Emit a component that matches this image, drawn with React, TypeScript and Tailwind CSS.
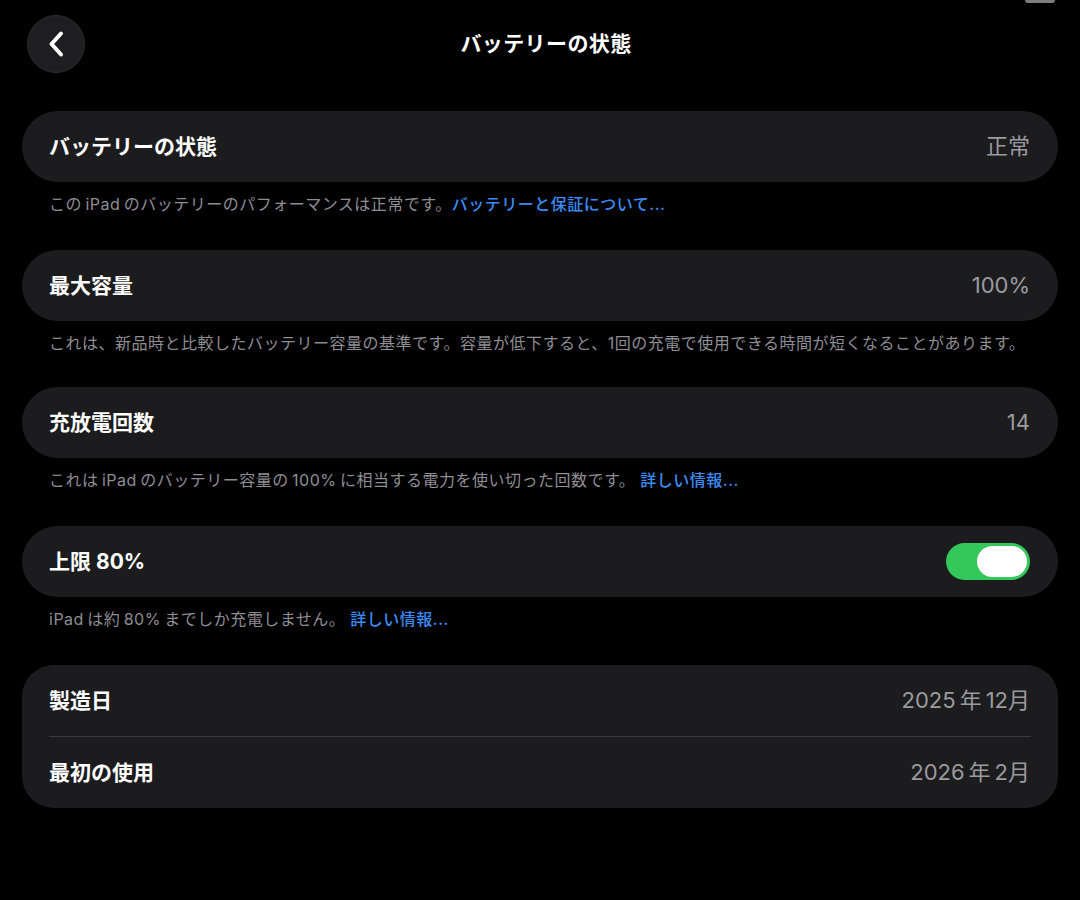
import React from "react";

const font = { fontFamily: '"Inter", "Noto Sans CJK JP", sans-serif' };

function Row({ label, value, children }: { label: string; value?: string; children?: React.ReactNode }) {
    return (
        <div className="flex items-center justify-between h-[71px] pl-[27px] pr-[28px]">
            <span className="text-[21px] font-bold text-white">{label}</span>
            {value && <span className="text-[22px] text-[#9a9aa0]">{value}</span>}
            {children}
        </div>
    );
}

function Note({ text, link, tight }: { text: string; link?: string; tight?: boolean }) {
    return (
        <p className={`pl-[27px] pt-[11px] ${tight ? "pb-[33px]" : "pb-[35px]"} text-[16px] tracking-[0.5px] leading-[22px] text-[#8e8e93]`}>
            {text}
            {link && <span className="text-[#3b8cf6] font-medium">{link}</span>}
        </p>
    );
}

export default function App() {
    return (
        <div className="relative min-h-[900px] bg-black px-[22px]" style={font}>
            {/* partial element at the top edge */}
            <div className="absolute top-0 right-[25px] w-[30px] h-[3px] rounded-b bg-[#7c7c7c]" />

            {/* Header */}
            <div className="relative flex items-center justify-center h-[88px] pl-[12px]">
                <button className="absolute left-[5px] top-[15px] w-[58px] h-[58px] rounded-full bg-[#1e1e20] border border-[#2c2c2e] flex items-center justify-center">
                    <svg width="18" height="28" viewBox="0 0 18 28" fill="none">
                        <path d="M14 3.5 L4.5 14 L14 24.5" stroke="white" strokeWidth="4" strokeLinecap="round" strokeLinejoin="round" />
                    </svg>
                </button>
                <h1 className="text-[21px] tracking-[0.4px] font-bold text-white">バッテリーの状態</h1>
            </div>

            <div className="mt-[23px]">
                <div className="rounded-[36px] bg-[#1c1c1e]">
                    <Row label="バッテリーの状態" value="正常" />
                </div>
                <Note text={"この\u2009iPad\u2009のバッテリーのパフォーマンスは正常です。"} link="バッテリーと保証について..." />

                <div className="rounded-[36px] bg-[#1c1c1e]">
                    <Row label="最大容量" value="100%" />
                </div>
                <Note tight text="これは、新品時と比較したバッテリー容量の基準です。容量が低下すると、1回の充電で使用できる時間が短くなることがあります。" />

                <div className="rounded-[36px] bg-[#1c1c1e]">
                    <Row label="充放電回数" value="14" />
                </div>
                <Note text={"これは\u2009iPad\u2009のバッテリー容量の\u2009100%\u2009に相当する電力を使い切った回数です。 "} link="詳しい情報..." />

                <div className="rounded-[36px] bg-[#1c1c1e]">
                    <Row label="上限 80%">
                        <div className="flex items-center justify-end w-[84px] h-[37px] rounded-full bg-[#34c759] pr-[3px]">
                            <div className="w-[50px] h-[31px] rounded-full bg-white" />
                        </div>
                    </Row>
                </div>
                <Note text={"iPad\u2009は約\u200980%\u2009までしか充電しません。 "} link="詳しい情報..." />

                <div className="rounded-[32px] bg-[#1c1c1e]">
                    <Row label="製造日" value={"2025\u2009年\u200912月"} />
                    <div className="ml-[27px] mr-[27px] h-px bg-[#3a3a3c]" />
                    <Row label="最初の使用" value={"2026\u2009年\u20092月"} />
                </div>
            </div>
        </div>
    );
}
